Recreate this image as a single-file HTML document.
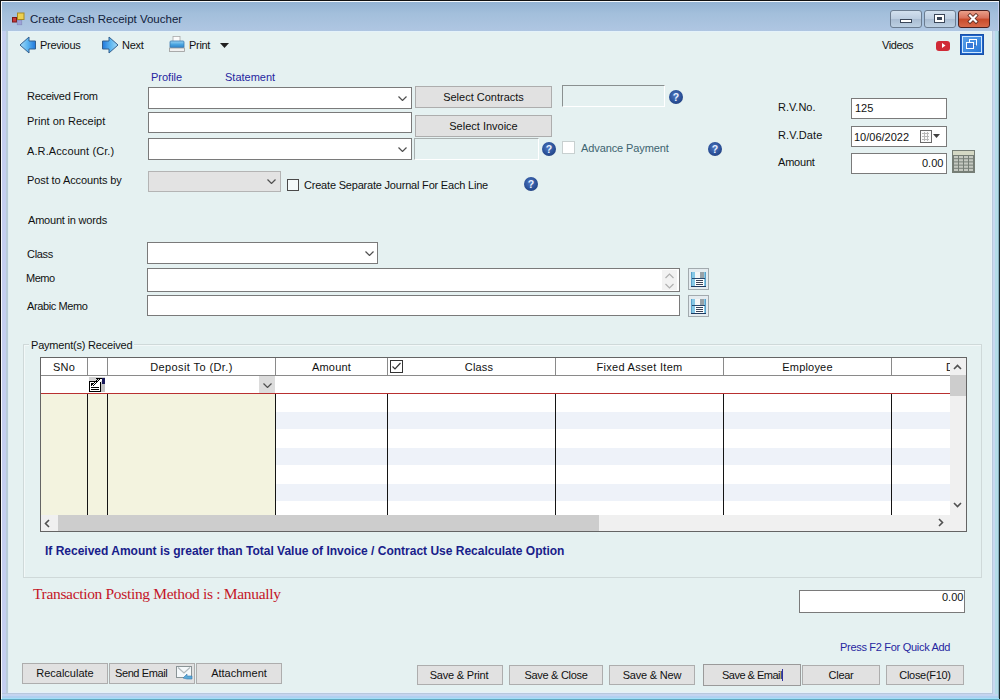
<!DOCTYPE html>
<html><head><meta charset="utf-8">
<style>
*{box-sizing:border-box;margin:0;padding:0}
html,body{width:1000px;height:700px;overflow:hidden;background:#e5f1f1}
body{position:relative;font-family:"Liberation Sans",sans-serif;font-size:11px;color:#111}
.a{position:absolute}
.t{position:absolute;white-space:nowrap;line-height:1}
.in{position:absolute;background:#fff;border:1px solid #7a7a7a}
.btn{position:absolute;background:#e1e1e1;border:1px solid #adadad;text-align:center;white-space:nowrap;line-height:1}
.chev{position:absolute;width:9px;height:5px}
.help{position:absolute;width:14px;height:14px;margin-top:1px;border-radius:50%;background:radial-gradient(circle at 45% 40%,#4f78c0 0,#2a5098 55%,#1e3468 100%);color:#e8f0ff;font-weight:bold;font-size:10.5px;text-align:center;line-height:14px}
.link{color:#2626a0}
</style></head><body>

<!-- window frame -->
<div class="a" style="left:0;top:0;width:1000px;height:700px;background:#c4cff0"></div>
<div class="a" style="left:2px;top:2px;width:996px;height:29px;background:linear-gradient(#93b3d3,#a3bfdb 40%,#afc6e2 100%)"></div>
<div class="a" style="left:0;top:0;width:1px;height:700px;background:#101010"></div>
<div class="a" style="left:0;top:0;width:1000px;height:1px;background:#101010"></div>
<div class="a" style="left:1px;top:1px;width:1px;height:699px;background:#f4f8fa"></div>
<div class="a" style="left:1px;top:1px;width:998px;height:1px;background:#f4f8fa"></div>
<div class="a" style="left:6px;top:31px;width:2px;height:662px;background:#b8ccd8"></div>
<div class="a" style="left:992px;top:31px;width:1px;height:662px;background:#b8c8dc"></div>
<div class="a" style="left:993px;top:31px;width:2px;height:669px;background:#c8d8f0"></div>
<div class="a" style="left:995px;top:31px;width:3px;height:669px;background:#b4dce8"></div>
<div class="a" style="left:998px;top:31px;width:1px;height:669px;background:#8ab0c0"></div>
<div class="a" style="left:999px;top:0;width:1px;height:700px;background:#1a2a30"></div>
<div class="a" style="left:2px;top:693px;width:991px;height:1px;background:#b8c8dc"></div>
<div class="a" style="left:2px;top:694px;width:996px;height:2px;background:#c4d4f0"></div>
<div class="a" style="left:2px;top:696px;width:996px;height:2px;background:#b0d0f0"></div>
<div class="a" style="left:2px;top:698px;width:997px;height:1px;background:#a0e0f8"></div>
<div class="a" style="left:1px;top:699px;width:999px;height:1px;background:#60a8c0"></div>
<!-- content area -->
<div class="a" style="left:8px;top:31px;width:984px;height:662px;background:#e5f1f1;border-top:1px solid #e4f2fa;border-left:1px solid #e0eef2;border-right:1px solid #e8f4f8;border-bottom:1px solid #e4f0fa"></div>

<!-- title -->
<svg class="a" style="left:11px;top:12px" width="14" height="14" viewBox="0 0 14 14">
 <rect x="1.5" y="5.5" width="4" height="4.5" fill="#c83838" stroke="#7a1818" stroke-width="1"/>
 <rect x="6.5" y="1" width="6.5" height="6.5" fill="#ecd050" stroke="#a88a20" stroke-width="1"/>
 <rect x="6.2" y="8.6" width="4.6" height="4.2" fill="#9ea2d8" stroke="#8088b8" stroke-width="0.6"/>
</svg>
<div class="t" style="left:30px;top:14px;font-size:11.5px;color:#10203a">Create Cash Receipt Voucher</div>

<!-- title buttons -->
<div class="a" style="left:890px;top:10px;width:32px;height:18px;border:1px solid #6b7c90;border-radius:3px;background:linear-gradient(#d2e0ee,#bccde0 50%,#a9bcd2 51%,#bdd0e2)"></div>
<div class="a" style="left:900px;top:19px;width:12px;height:4px;border:1px solid #3a4658;background:#fff"></div>
<div class="a" style="left:924px;top:10px;width:32px;height:18px;border:1px solid #6b7c90;border-radius:3px;background:linear-gradient(#d2e0ee,#bccde0 50%,#a9bcd2 51%,#bdd0e2)"></div>
<div class="a" style="left:934px;top:14px;width:11px;height:9px;border:1px solid #3a4658;background:#fff"><div class="a" style="left:2px;top:2px;width:5px;height:3px;background:#3a4658"></div></div>
<div class="a" style="left:958px;top:10px;width:32px;height:18px;border:1px solid #4a2020;border-radius:3px;background:linear-gradient(#eaa08a,#d8705a 45%,#c84a2a 50%,#d86a4a)"></div>
<svg class="a" style="left:966px;top:13px" width="14" height="12" viewBox="0 0 14 12">
 <path d="M4,2.5 L10,8.5 M10,2.5 L4,8.5" stroke="#5a2a20" stroke-width="3.8" stroke-linecap="square"/>
 <path d="M4,2.5 L10,8.5 M10,2.5 L4,8.5" stroke="#fff" stroke-width="2.2" stroke-linecap="square"/>
</svg>

<!-- toolbar -->
<svg class="a" style="left:19px;top:36px" width="18" height="18" viewBox="0 0 18 18">
 <defs><linearGradient id="ag" x1="0" x2="1"><stop offset="0" stop-color="#a6dcf8"/><stop offset="0.5" stop-color="#5ab4f0"/><stop offset="1" stop-color="#2278dc"/></linearGradient><linearGradient id="ag2" x1="1" x2="0"><stop offset="0" stop-color="#a6dcf8"/><stop offset="0.5" stop-color="#5ab4f0"/><stop offset="1" stop-color="#2278dc"/></linearGradient></defs>
 <path d="M1,9 L10,1 L10,5 L16.5,5 L16.5,13 L10,13 L10,17 Z" fill="url(#ag)" stroke="#34608e" stroke-width="1"/>
</svg>
<div class="t" style="left:40px;top:40px;font-size:11px;letter-spacing:-0.3px">Previous</div>
<svg class="a" style="left:101px;top:36px" width="18" height="18" viewBox="0 0 18 18">
 <path d="M17,9 L8,1 L8,5 L1.5,5 L1.5,13 L8,13 L8,17 Z" fill="url(#ag2)" stroke="#34608e" stroke-width="1"/>
</svg>
<div class="t" style="left:122px;top:40px;font-size:11px;letter-spacing:-0.3px">Next</div>
<svg class="a" style="left:169px;top:36px" width="16" height="16" viewBox="0 0 16 16">
 <defs><linearGradient id="pg" x1="0" y1="0" x2="0" y2="1"><stop offset="0" stop-color="#9ad4f4"/><stop offset="0.5" stop-color="#4aa4e0"/><stop offset="1" stop-color="#2a7cc4"/></linearGradient></defs>
 <rect x="4" y="0.5" width="7" height="6" fill="#fbfbfb" stroke="#a8a8a8" stroke-width="0.8"/>
 <rect x="1" y="5" width="14" height="7" rx="1" fill="url(#pg)" stroke="#3a78b0" stroke-width="0.8"/>
 <rect x="0.5" y="12" width="15" height="3.5" fill="#f0f0f0" stroke="#9a9a9a" stroke-width="0.8"/>
</svg>
<div class="t" style="left:189px;top:40px;font-size:11px;letter-spacing:-0.3px">Print</div>
<svg class="a" style="left:220px;top:43px" width="9" height="6" viewBox="0 0 9 6"><path d="M0,0 L9,0 L4.5,5 Z" fill="#202020"/></svg>

<div class="t" style="left:882px;top:40px;font-size:11px;letter-spacing:-0.4px">Videos</div>
<div class="a" style="left:936px;top:41px;width:14px;height:10px;border-radius:3px;background:#d02a36"></div>
<svg class="a" style="left:942px;top:43px" width="4" height="5" viewBox="0 0 4 5"><path d="M0,0 L3.5,2.5 L0,5 Z" fill="#fff"/></svg>
<div class="a" style="left:960px;top:34px;width:24px;height:21px;background:#1e64c8;border:1px solid #1a50a8"></div>
<div class="a" style="left:962px;top:36px;width:20px;height:17px;border:1px solid #d0e8ff;background:linear-gradient(135deg,#5aa0e8,#2a78d8)"></div>
<div class="a" style="left:969px;top:39px;width:8px;height:7px;border:1px solid #fff;border-bottom-color:#3a6ab8"></div>
<div class="a" style="left:966px;top:42px;width:8px;height:7px;border:1px solid #fff;background:#3a7ad8"></div>

<!-- top form -->
<div class="t link" style="left:151px;top:72px">Profile</div>
<div class="t link" style="left:225px;top:72px">Statement</div>

<div class="t" style="left:27px;top:91px;letter-spacing:-0.3px">Received From</div>
<div class="t" style="left:27px;top:116px;letter-spacing:0px">Print on Receipt</div>
<div class="t" style="left:27px;top:146px;letter-spacing:0.1px">A.R.Account (Cr.)</div>
<div class="t" style="left:27px;top:175px;letter-spacing:-0.1px">Post to Accounts by</div>

<div class="in" style="left:148px;top:87px;width:264px;height:22px"></div>
<svg class="chev" style="left:398px;top:96px" viewBox="0 0 9 5"><path d="M0.5,0.5 L4.5,4.5 L8.5,0.5" fill="none" stroke="#505050" stroke-width="1.2"/></svg>
<div class="in" style="left:148px;top:112px;width:264px;height:21px"></div>
<div class="in" style="left:148px;top:138px;width:264px;height:22px"></div>
<svg class="chev" style="left:398px;top:147px" viewBox="0 0 9 5"><path d="M0.5,0.5 L4.5,4.5 L8.5,0.5" fill="none" stroke="#505050" stroke-width="1.2"/></svg>
<div class="a" style="left:148px;top:171px;width:133px;height:21px;background:#e3e3e3;border:1px solid #b4b4b4"></div>
<svg class="chev" style="left:267px;top:179px" viewBox="0 0 9 5"><path d="M0.5,0.5 L4.5,4.5 L8.5,0.5" fill="none" stroke="#505050" stroke-width="1.2"/></svg>
<div class="a" style="left:287px;top:179px;width:12px;height:12px;background:#f4fafa;border:1px solid #4a4a4a"></div>
<div class="t" style="left:304px;top:180px;letter-spacing:-0.2px">Create Separate Journal For Each Line</div>
<div class="help" style="left:524px;top:176px">?</div>

<div class="btn" style="left:415px;top:86px;width:137px;height:22px;padding-top:5px">Select Contracts</div>
<div class="btn" style="left:415px;top:115px;width:137px;height:22px;padding-top:5px">Select Invoice</div>
<div class="a" style="left:414px;top:138px;width:125px;height:22px;background:#e5f1f1;border:1px solid #a8b0b0;border-right-color:#fff;border-bottom-color:#fff"></div>
<div class="help" style="left:542px;top:141px">?</div>

<div class="a" style="left:562px;top:85px;width:103px;height:22px;background:#e5f1f1;border:1px solid #8a9090;border-right-color:#fff;border-bottom-color:#fff"></div>
<div class="help" style="left:669px;top:89px">?</div>
<div class="a" style="left:562px;top:141px;width:13px;height:13px;background:#fff;border:1px solid #c8d0d0"></div>
<div class="t" style="left:581px;top:143px;color:#3d6470;letter-spacing:-0.1px">Advance Payment</div>
<div class="help" style="left:708px;top:141px">?</div>

<div class="t" style="left:778px;top:102px">R.V.No.</div>
<div class="t" style="left:778px;top:130px;letter-spacing:0.1px">R.V.Date</div>
<div class="t" style="left:778px;top:157px;letter-spacing:-0.2px">Amount</div>
<div class="in" style="left:851px;top:98px;width:96px;height:21px"></div>
<div class="t" style="left:855px;top:103px">125</div>
<div class="in" style="left:851px;top:126px;width:96px;height:21px"></div>
<div class="t" style="left:854px;top:132px;letter-spacing:0px">10/06/2022</div>
<svg class="a" style="left:919px;top:129px" width="24" height="15" viewBox="0 0 24 15" shape-rendering="crispEdges">
 <rect x="2" y="2" width="11" height="12" fill="#c0c0c0"/>
 <rect x="1" y="1" width="11" height="12" fill="#fafafa" stroke="#6a6a6a" stroke-width="1"/>
 <g fill="#b8b8b8"><rect x="3" y="4" width="7" height="1"/><rect x="3" y="7" width="7" height="1"/><rect x="3" y="10" width="7" height="1"/><rect x="5" y="3" width="1" height="9"/><rect x="8" y="3" width="1" height="9"/></g>
 <path d="M14,5 L21,5 L17.5,9 Z" fill="#404040" shape-rendering="auto"/>
</svg>
<div class="in" style="left:851px;top:153px;width:96px;height:21px"></div>
<div class="t" style="left:922px;top:158px">0.00</div>
<svg class="a" style="left:952px;top:150px" width="23" height="23" viewBox="0 0 23 23">
 <rect x="0" y="0" width="23" height="23" fill="#767e76"/>
 <rect x="1" y="1" width="21" height="4" fill="#d4d8c4"/>
 <g fill="#c4c8c0"><rect x="2" y="6.0" width="4" height="2.2"/><rect x="7" y="6.0" width="4" height="2.2"/><rect x="12" y="6.0" width="4" height="2.2"/><rect x="17" y="6.0" width="4" height="2.2"/><rect x="2" y="9.2" width="4" height="2.2"/><rect x="7" y="9.2" width="4" height="2.2"/><rect x="12" y="9.2" width="4" height="2.2"/><rect x="17" y="9.2" width="4" height="2.2"/><rect x="2" y="12.4" width="4" height="2.2"/><rect x="7" y="12.4" width="4" height="2.2"/><rect x="12" y="12.4" width="4" height="2.2"/><rect x="17" y="12.4" width="4" height="2.2"/><rect x="2" y="15.6" width="4" height="2.2"/><rect x="7" y="15.6" width="4" height="2.2"/><rect x="12" y="15.6" width="4" height="2.2"/><rect x="17" y="15.6" width="4" height="2.2"/><rect x="2" y="18.8" width="4" height="2.2"/><rect x="7" y="18.8" width="4" height="2.2"/><rect x="12" y="18.8" width="4" height="2.2"/><rect x="17" y="18.8" width="4" height="2.2"/></g>
</svg>

<div class="t" style="left:28px;top:215px;letter-spacing:-0.2px">Amount in words</div>
<div class="t" style="left:27px;top:249px;letter-spacing:-0.3px">Class</div>
<div class="t" style="left:26px;top:273px;letter-spacing:-0.5px">Memo</div>
<div class="t" style="left:27px;top:301px;letter-spacing:-0.4px">Arabic Memo</div>
<div class="in" style="left:147px;top:242px;width:231px;height:22px"></div>
<svg class="chev" style="left:365px;top:251px" viewBox="0 0 9 5"><path d="M0.5,0.5 L4.5,4.5 L8.5,0.5" fill="none" stroke="#505050" stroke-width="1.2"/></svg>
<div class="in" style="left:147px;top:268px;width:533px;height:24px"></div>
<div class="a" style="left:662px;top:270px;width:15px;height:20px;background:#f2f2f2"></div>
<svg class="a" style="left:665px;top:273px" width="9" height="17" viewBox="0 0 9 17"><path d="M0.5,5 L4.5,1 L8.5,5 M0.5,11 L4.5,15 L8.5,11" fill="none" stroke="#b0b0b0" stroke-width="1.2"/></svg>
<div class="in" style="left:147px;top:295px;width:533px;height:21px"></div>

<svg class="a" style="left:688px;top:268px" width="21" height="22" viewBox="0 0 21 22" shape-rendering="crispEdges">
 <rect x="0.5" y="0.5" width="20" height="21" fill="#e4ecf0" stroke="#a2aaae"/>
 <rect x="3" y="4" width="15" height="15" fill="#86c8e6"/>
 <rect x="3" y="4" width="1" height="15" fill="#5aa0c8"/><rect x="17" y="4" width="1" height="15" fill="#5aa0c8"/>
 <rect x="7" y="4" width="5" height="6" fill="#f4f6f6"/><rect x="12" y="4" width="4" height="6" fill="#98a2a8"/>
 <rect x="4" y="10" width="13" height="1" fill="#2a4a70"/>
 <rect x="7" y="11" width="9" height="7" fill="#fff"/>
 <rect x="8" y="12" width="7" height="1" fill="#3a4458"/><rect x="8" y="14" width="7" height="1" fill="#3a4458"/><rect x="8" y="16" width="7" height="1" fill="#3a4458"/>
 <rect x="3" y="18" width="15" height="1" fill="#1e3a60"/>
</svg>
<svg class="a" style="left:688px;top:295px" width="21" height="22" viewBox="0 0 21 22" shape-rendering="crispEdges">
 <rect x="0.5" y="0.5" width="20" height="21" fill="#e4ecf0" stroke="#a2aaae"/>
 <rect x="3" y="4" width="15" height="15" fill="#86c8e6"/>
 <rect x="3" y="4" width="1" height="15" fill="#5aa0c8"/><rect x="17" y="4" width="1" height="15" fill="#5aa0c8"/>
 <rect x="7" y="4" width="5" height="6" fill="#f4f6f6"/><rect x="12" y="4" width="4" height="6" fill="#98a2a8"/>
 <rect x="4" y="10" width="13" height="1" fill="#2a4a70"/>
 <rect x="7" y="11" width="9" height="7" fill="#fff"/>
 <rect x="8" y="12" width="7" height="1" fill="#3a4458"/><rect x="8" y="14" width="7" height="1" fill="#3a4458"/><rect x="8" y="16" width="7" height="1" fill="#3a4458"/>
 <rect x="3" y="18" width="15" height="1" fill="#1e3a60"/>
</svg>

<!-- group box -->
<div class="a" style="left:23px;top:344px;width:959px;height:234px;border:1px solid #cfd9d9"></div>
<div class="a" style="left:24px;top:345px;width:957px;height:232px;border-top:1px solid #f2f8f8;border-left:1px solid #f2f8f8"></div>
<div class="t" style="left:29px;top:340px;padding:0 2px;background:#e5f1f1;letter-spacing:-0.2px">Payment(s) Received</div>

<!-- grid -->
<div class="a" style="left:40px;top:357px;width:927px;height:175px;border:1px solid #646464;background:#fff"></div>
<div class="a" style="left:41px;top:394px;width:235px;height:121px;background:#f3f3df"></div>
<div class="a" style="left:276px;top:412px;width:674px;height:17px;background:#eef2f9"></div>
<div class="a" style="left:276px;top:448px;width:674px;height:17px;background:#eef2f9"></div>
<div class="a" style="left:276px;top:484px;width:674px;height:17px;background:#eef2f9"></div>
<div class="a" style="left:87px;top:358px;width:1px;height:17px;background:#8a8a8a"></div>
<div class="a" style="left:107px;top:358px;width:1px;height:17px;background:#8a8a8a"></div>
<div class="a" style="left:275px;top:358px;width:1px;height:17px;background:#8a8a8a"></div>
<div class="a" style="left:387px;top:358px;width:1px;height:17px;background:#8a8a8a"></div>
<div class="a" style="left:555px;top:358px;width:1px;height:17px;background:#8a8a8a"></div>
<div class="a" style="left:723px;top:358px;width:1px;height:17px;background:#8a8a8a"></div>
<div class="a" style="left:891px;top:358px;width:1px;height:17px;background:#8a8a8a"></div>
<div class="a" style="left:41px;top:375px;width:909px;height:1px;background:#8a8a8a"></div>

<div class="a" style="left:41px;top:393px;width:909px;height:1px;background:#b83030"></div>
<div class="a" style="left:87px;top:394px;width:1px;height:121px;background:#141414"></div>
<div class="a" style="left:107px;top:394px;width:1px;height:121px;background:#141414"></div>
<div class="a" style="left:275px;top:394px;width:1px;height:121px;background:#141414"></div>
<div class="a" style="left:387px;top:394px;width:1px;height:121px;background:#141414"></div>
<div class="a" style="left:555px;top:394px;width:1px;height:121px;background:#141414"></div>
<div class="a" style="left:723px;top:394px;width:1px;height:121px;background:#141414"></div>
<div class="a" style="left:891px;top:394px;width:1px;height:121px;background:#141414"></div>
<div class="a" style="left:259px;top:376px;width:16px;height:17px;background:#dcdcdc"></div>
<svg class="chev" style="left:263px;top:383px" viewBox="0 0 9 5"><path d="M0.5,0.5 L4.5,4.5 L8.5,0.5" fill="none" stroke="#505050" stroke-width="1.2"/></svg>
<svg class="a" style="left:89px;top:377px" width="16" height="15" viewBox="0 0 16 15" shape-rendering="crispEdges">
 <rect x="0" y="0" width="16" height="15" fill="#d4d4d4"/>
 <rect x="12" y="6" width="4" height="9" fill="#c4c4c4"/>
 <rect x="0.5" y="4.5" width="11" height="10" fill="#fff" stroke="#000" stroke-width="1"/>
 <rect x="2" y="10" width="8" height="1" fill="#000"/><rect x="2" y="12" width="8" height="1" fill="#000"/>
 <rect x="9" y="1" width="1" height="1" fill="#000"/><rect x="11" y="1" width="1" height="1" fill="#000"/><rect x="12" y="1" width="1" height="1" fill="#fff"/><rect x="8" y="2" width="1" height="1" fill="#000"/><rect x="10" y="2" width="1" height="1" fill="#000"/><rect x="11" y="2" width="1" height="1" fill="#fff"/><rect x="12" y="2" width="1" height="1" fill="#fff"/><rect x="7" y="3" width="1" height="1" fill="#000"/><rect x="9" y="3" width="1" height="1" fill="#000"/><rect x="10" y="3" width="1" height="1" fill="#fff"/><rect x="11" y="3" width="1" height="1" fill="#fff"/><rect x="12" y="3" width="1" height="1" fill="#fff"/><rect x="6" y="4" width="1" height="1" fill="#000"/><rect x="8" y="4" width="1" height="1" fill="#000"/><rect x="9" y="4" width="1" height="1" fill="#fff"/><rect x="10" y="4" width="1" height="1" fill="#fff"/><rect x="11" y="4" width="1" height="1" fill="#fff"/><rect x="5" y="5" width="1" height="1" fill="#000"/><rect x="7" y="5" width="1" height="1" fill="#000"/><rect x="8" y="5" width="1" height="1" fill="#fff"/><rect x="9" y="5" width="1" height="1" fill="#fff"/><rect x="10" y="5" width="1" height="1" fill="#fff"/><rect x="4" y="6" width="1" height="1" fill="#000"/><rect x="6" y="6" width="1" height="1" fill="#000"/><rect x="7" y="6" width="1" height="1" fill="#fff"/><rect x="8" y="6" width="1" height="1" fill="#fff"/><rect x="9" y="6" width="1" height="1" fill="#fff"/><rect x="3" y="7" width="1" height="1" fill="#000"/><rect x="5" y="7" width="1" height="1" fill="#000"/><rect x="6" y="7" width="1" height="1" fill="#fff"/><rect x="7" y="7" width="1" height="1" fill="#fff"/><rect x="8" y="7" width="1" height="1" fill="#fff"/><rect x="2" y="8" width="1" height="1" fill="#000"/><rect x="4" y="8" width="1" height="1" fill="#000"/><rect x="5" y="8" width="1" height="1" fill="#fff"/><rect x="6" y="8" width="1" height="1" fill="#fff"/><rect x="7" y="8" width="1" height="1" fill="#fff"/>
 <rect x="2" y="6" width="2" height="2" fill="#000"/>
 <rect x="7" y="1" width="6" height="1" fill="#000"/>
 <rect x="13" y="1" width="3" height="6" fill="#1a1a5a"/>
</svg>
<div class="t" style="left:41px;top:362px;width:46px;text-align:center;letter-spacing:0.2px">SNo</div>
<div class="t" style="left:108px;top:362px;width:167px;text-align:center;letter-spacing:0.4px">Deposit To (Dr.)</div>
<div class="t" style="left:276px;top:362px;width:111px;text-align:center;letter-spacing:0.2px">Amount</div>
<div class="t" style="left:403px;top:362px;width:152px;text-align:center;letter-spacing:0.2px">Class</div>
<div class="t" style="left:556px;top:362px;width:167px;text-align:center;letter-spacing:0.3px">Fixed Asset Item</div>
<div class="t" style="left:724px;top:362px;width:167px;text-align:center;letter-spacing:0.2px">Employee</div>
<div class="t" style="left:946px;top:362px">D</div>
<svg class="a" style="left:390px;top:360px" width="13" height="13" viewBox="0 0 13 13"><rect x="0.5" y="0.5" width="12" height="12" fill="#fff" stroke="#333"/><path d="M2.5,6.5 L5,9 L10.5,3" fill="none" stroke="#333" stroke-width="1.2"/></svg>
<div class="a" style="left:950px;top:358px;width:16px;height:173px;background:#f0f0f0"></div>
<div class="a" style="left:950px;top:375px;width:16px;height:21px;background:#cdcdcd"></div>
<svg class="a" style="left:953px;top:364px" width="9" height="6" viewBox="0 0 9 6"><path d="M1,5 L4.5,1.5 L8,5" fill="none" stroke="#505050" stroke-width="1.6"/></svg>
<svg class="a" style="left:953px;top:502px" width="9" height="6" viewBox="0 0 9 6"><path d="M1,1 L4.5,4.5 L8,1" fill="none" stroke="#505050" stroke-width="1.6"/></svg>
<div class="a" style="left:41px;top:515px;width:909px;height:16px;background:#f0f0f0"></div>
<div class="a" style="left:58px;top:515px;width:541px;height:16px;background:#cdcdcd"></div>
<svg class="a" style="left:44px;top:519px" width="6" height="9" viewBox="0 0 6 9"><path d="M5,1 L1.5,4.5 L5,8" fill="none" stroke="#505050" stroke-width="1.6"/></svg>
<svg class="a" style="left:938px;top:518px" width="6" height="9" viewBox="0 0 6 9"><path d="M1,1 L4.5,4.5 L1,8" fill="none" stroke="#505050" stroke-width="1.6"/></svg>

<div class="t" style="left:45px;top:545px;font-weight:bold;font-size:12px;color:#18208a">If Received Amount is greater than Total Value of Invoice / Contract Use Recalculate Option</div>
<div class="t" style="left:33px;top:586px;font-family:'Liberation Serif',serif;font-size:15.5px;letter-spacing:-0.33px;color:#c41628">Transaction Posting Method is : Manually</div>

<div class="in" style="left:799px;top:590px;width:166px;height:23px"></div>
<div class="t" style="left:942px;top:592px">0.00</div>

<div class="t link" style="left:840px;top:642px;letter-spacing:-0.3px">Press F2 For Quick Add</div>

<div class="btn" style="left:22px;top:663px;width:86px;height:21px;padding-top:4px">Recalculate</div>
<div class="btn" style="left:109px;top:663px;width:86px;height:21px;padding-top:4px;text-align:left;padding-left:5px;letter-spacing:-0.4px">Send Email</div>
<svg class="a" style="left:176px;top:666px" width="17" height="14" viewBox="0 0 17 14">
 <rect x="0.5" y="0.5" width="15" height="11" fill="#f4f8fa" stroke="#8a9496"/>
 <path d="M2,1.5 L8,7 L14,1.5" fill="none" stroke="#b0b8bc" stroke-width="1.2"/>
 <path d="M7,12 L11,8 L11,10 L16,10 L16,13 L11,13 Z" fill="#5aaad8" stroke="#3a7ab0" stroke-width="0.6"/>
</svg>
<div class="btn" style="left:196px;top:663px;width:86px;height:21px;padding-top:4px">Attachment</div>

<div class="btn" style="left:417px;top:665px;width:86px;height:20px;padding-top:4px;padding-right:2px;letter-spacing:-0.2px">Save &amp; Print</div>
<div class="btn" style="left:509px;top:665px;width:94px;height:20px;padding-top:4px;letter-spacing:-0.3px">Save &amp; Close</div>
<div class="btn" style="left:609px;top:665px;width:86px;height:20px;padding-top:4px;letter-spacing:-0.2px">Save &amp; New</div>
<div class="btn" style="left:703px;top:664px;width:98px;height:22px;padding-top:5px;border-color:#9a9a9a;letter-spacing:-0.5px">Save &amp; Email<span class="a" style="left:78px;top:4px;width:1px;height:12px;background:#3030a0"></span></div>
<div class="btn" style="left:802px;top:665px;width:78px;height:20px;padding-top:4px;letter-spacing:-0.3px">Clear</div>
<div class="btn" style="left:886px;top:665px;width:78px;height:20px;padding-top:4px;letter-spacing:-0.3px">Close(F10)</div>

</body></html>
